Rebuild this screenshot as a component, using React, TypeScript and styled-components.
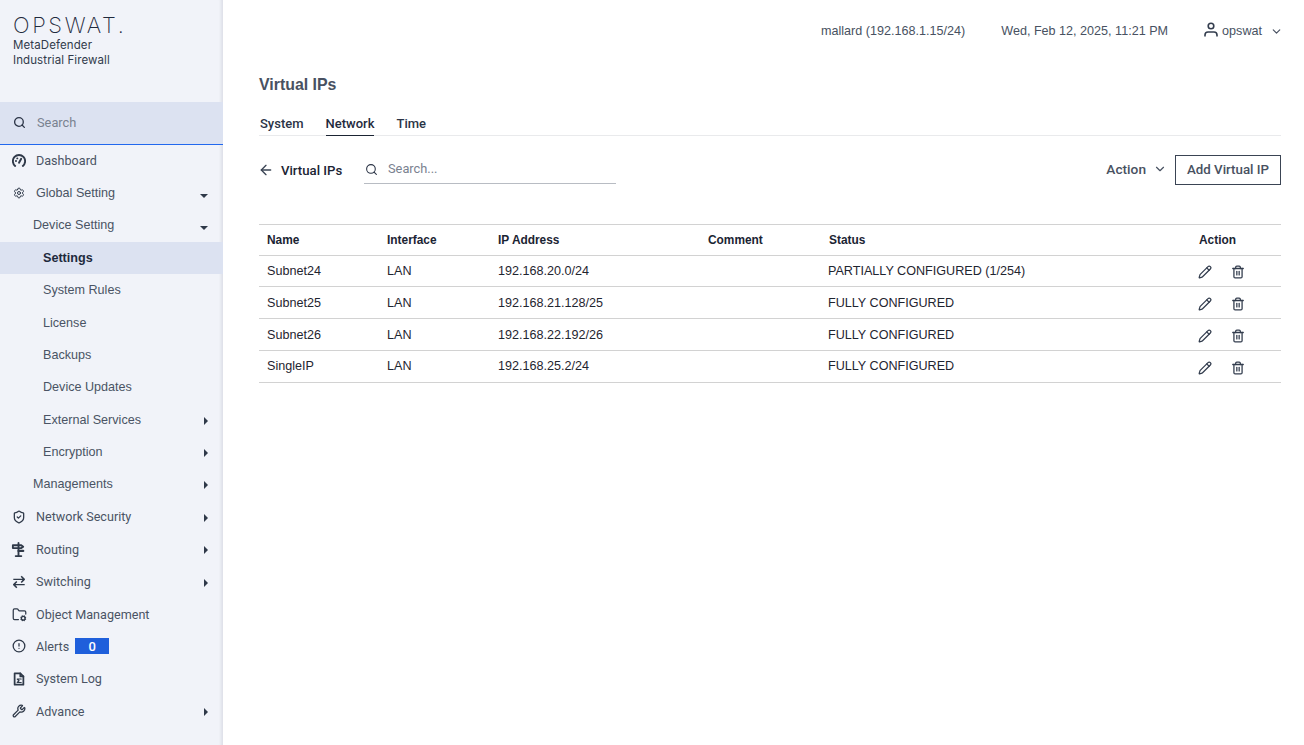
import React from 'react';
import styled, { createGlobalStyle } from 'styled-components';
import { Search, ArrowLeft, ChevronDown, Pencil, Trash2, Settings, ShieldCheck, FolderCog, CircleAlert, Wrench } from 'lucide-react';

const Global = createGlobalStyle`
  html, body { margin: 0; padding: 0; height: 100%; background: #fff; }
  body { font-family: "Liberation Sans", Arial, sans-serif; font-size: 12.6px; color: #485161; overflow: hidden; }
  #root { height: 100%; }
  * { box-sizing: border-box; }
`;

const Page = styled.div`display: flex; width: 1304px; height: 745px;`;
const Side = styled.aside`
  width: 223px; flex: none; background: #f1f3f9; box-shadow: inset -4px 0 3px -2px rgba(20,30,60,.09);
  display: flex; flex-direction: column; height: 745px;
`;
const Brand = styled.div`height: 102px; padding: 14px 0 0 13px; color: #313b4b;`;
const Logo = styled.div`font-family: "Inter", sans-serif; font-weight: 200; font-size: 22px; letter-spacing: 2.6px; line-height: 23px; height: 24px; color: #1f2a3d; white-space: nowrap;`;
const Product = styled.div`font-family: "Inter", sans-serif; font-size: 11.5px; line-height: 14.5px; letter-spacing: .1px;`;
const SearchRow = styled.div`
  height: 43px; background: #dce2f1; border-bottom: 1px solid #2168ee; display: flex; align-items: center;
  padding: 0 0 2px 13px; gap: 11px; color: #7a8290; margin-bottom: -1px; font-family: "Roboto", sans-serif; font-size: 12.8px;
  svg { color: #2b3446; }
`;
const Nav = styled.nav`display: flex; flex-direction: column; padding-top: .4px;`;
const Item = styled.div<{ $indent: number; $active?: boolean; $top?: boolean }>`
  height: 32.4px; display: flex; align-items: center; position: relative; padding-left: ${p => p.$indent}px;
  background: ${p => p.$active ? '#dce2f1' : 'transparent'};
  color: ${p => p.$active ? '#1f2a3d' : '#4a5364'}; font-weight: ${p => p.$active ? 700 : 400};
  ${p => p.$top ? 'font-family: "Roboto", sans-serif;' : ''}
`;
const IconSlot = styled.span`flex: none; display: inline-flex; align-items: center; color: #2f3949;`;
const Caret = styled.span<{ $open?: boolean }>`
  position: absolute; right: 15px; top: 50%; width: 0; height: 0; margin-top: ${p => p.$open ? 1 : -3}px;
  ${p => p.$open
    ? 'border-left: 4px solid transparent; border-right: 4px solid transparent; border-top: 4px solid #2f3949;'
    : 'border-top: 4px solid transparent; border-bottom: 4px solid transparent; border-left: 4px solid #2f3949;'}
`;
const Badge = styled.span`
  margin-left: 6px; width: 34px; height: 16px; background: #1f5fdb; color: #fff; font-size: 13px; font-weight: 500;
  display: inline-flex; align-items: center; justify-content: center;
`;
const Main = styled.main`flex: 1; padding: 0 23px 0 36px; min-width: 0;`;
const Top = styled.header`
  height: 62px; display: flex; justify-content: flex-end; align-items: center; gap: 36px; color: #485161;
`;
const UserBox = styled.span`display: inline-flex; align-items: center; gap: 4px;`;
const UserGlyph = styled.svg`display: block; fill: none; stroke: #333d4e; stroke-width: 1.6; margin-top: -3px;`;
const UserChevron = styled(ChevronDown)`margin: 0 -2px 0 4px;`;
const Title = styled.h1`margin: 13px 0 0; font-size: 15.9px; line-height: 20px; font-weight: 700; color: #485161;`;
const Tabs = styled.div`display: flex; gap: 22px; margin-top: 19px; height: 22px; border-bottom: 1px solid #e9eaec; padding-left: 1px;`;
const Tab = styled.div<{ $on?: boolean }>`
  font-family: "Roboto", sans-serif; font-size: 13px; font-weight: 500; color: #2b3446; height: 22px; line-height: 20px; ${p => p.$on ? 'border-bottom: 1px solid #1b2433; color:#1f2a3d;' : ''}
`;
const Bar = styled.div`display: flex; align-items: center; margin-top: 19px; height: 30px;`;
const Back = styled.div`display: flex; align-items: center; gap: 7px; margin-left: -1px; font-family: "Roboto", sans-serif; font-size: 13.2px; font-weight: 500; color: #1b2433; width: 106px; svg { color: #3a4454; }`;
const SearchBox = styled.div`
  width: 252px; height: 28px; display: flex; align-items: center; gap: 10px; padding-left: 1px; border-bottom: 1px solid #b8bcc3; color: #7a8290;
  font-family: "Roboto", sans-serif; font-size: 12.8px;
  svg { color: #2b3446; }
  span { margin-top: -3px; }
`;
const Spacer = styled.div`flex: 1;`;
const ActionMenu = styled.div`display: flex; align-items: center; gap: 7px; padding-bottom: 2px; font-family: "Roboto", sans-serif; font-size: 13.7px; font-weight: 500; color: #485161; margin-right: 8px;`;
const AddBtn = styled.button`
  width: 106px; height: 30px; background: #fff; border: 1px solid #3a4454; font: 500 13.3px "Roboto", sans-serif; color: #485161; padding: 0 0 2px;
`;
const Table = styled.table`width: 1022px; margin-top: 39px; border-collapse: collapse; table-layout: fixed; border-top: 1px solid #d2d2d2;`;
const Th = styled.th<{ $w: number }>`
  width: ${p => p.$w}px; text-align: left; font-size: 11.9px; font-weight: 700; color: #1b2433; height: 31px; padding: 0 0 0 8px; border-bottom: 1px solid #d2d2d2;
`;
const Row = styled.tr`
  &:first-child td { height: 31px; }
  &:nth-child(2) td, &:nth-child(3) td { padding-bottom: 0; }
`;
const Td = styled.td`
  height: 32px; padding: 0 0 1px 8px; border-bottom: 1px solid #d2d2d2; color: #1f2530;
  &:nth-child(5) { padding-left: 7px; }
`;
const Actions = styled.div`display: flex; gap: 19px; align-items: center; margin: 3px 0 0 -1px; color: #333d4e;`;
const Ico = styled.svg`display: block; fill: none; stroke: currentColor; stroke-linecap: round; stroke-linejoin: round;`;

const GaugeIcon = () => (
  <Ico width="14" height="14" viewBox="0 0 16 16" strokeWidth="2.2">
    <path d="M3.6 13.6A7 7 0 1 1 12.4 13.6" />
    <path d="M8 10L10.5 5.5" />
    <path d="M4.5 8H4.6M6 5H6.1" />
  </Ico>
);
const SignIcon = () => (
  <Ico width="15" height="15" viewBox="0 0 16 16" strokeWidth="2">
    <path d="M8 1V14.5M5 15H11" />
    <path d="M2 3.5H11L13 5L11 6.5H2Z" />
    <path d="M8 9.5H13" strokeWidth="2.4" />
  </Ico>
);
const SwapIcon = () => (
  <Ico width="14" height="14" viewBox="0 0 16 16" strokeWidth="1.7">
    <path d="M1.5 5H14M10.5 1.5L14 5L10.5 8.5" strokeLinecap="butt" />
    <path d="M14.5 11H2M5.5 7.5L2 11L5.5 14.5" strokeLinecap="butt" />
  </Ico>
);
const LogIcon = () => (
  <Ico width="14" height="14" viewBox="0 0 16 16" strokeWidth="2">
    <path d="M3 1.5H9.5L13 5V14.5H3Z" />
    <path d="M9.5 1.5V5H13" />
    <path d="M10.5 8H6L8 10L6 12H10.5" strokeWidth="1.4" />
  </Ico>
);

const nav: { t: string; i: number; top?: boolean; icon?: React.ReactNode; caret?: 'open' | 'closed'; active?: boolean; badge?: boolean }[] = [
  { t: 'Dashboard', i: 12, top: true, icon: <GaugeIcon /> },
  { t: 'Global Setting', i: 13, icon: <Settings size={12} strokeWidth={2} />, caret: 'open' },
  { t: 'Device Setting', i: 33, caret: 'open' },
  { t: 'Settings', i: 43, active: true },
  { t: 'System Rules', i: 43 },
  { t: 'License', i: 43 },
  { t: 'Backups', i: 43 },
  { t: 'Device Updates', i: 43 },
  { t: 'External Services', i: 43, caret: 'closed' },
  { t: 'Encryption', i: 43, caret: 'closed' },
  { t: 'Managements', i: 33, caret: 'closed' },
  { t: 'Network Security', i: 12, top: true, icon: <ShieldCheck size={14} strokeWidth={2.2} />, caret: 'closed' },
  { t: 'Routing', i: 11, top: true, icon: <SignIcon />, caret: 'closed' },
  { t: 'Switching', i: 12, top: true, icon: <SwapIcon />, caret: 'closed' },
  { t: 'Object Management', i: 12, top: true, icon: <FolderCog size={15} strokeWidth={2} /> },
  { t: 'Alerts', i: 12, top: true, icon: <CircleAlert size={14} strokeWidth={2.2} />, badge: true },
  { t: 'System Log', i: 12, top: true, icon: <LogIcon /> },
  { t: 'Advance', i: 12, top: true, icon: <Wrench size={14} strokeWidth={2.2} />, caret: 'closed' },
];

const rows = [
  ['Subnet24', 'LAN', '192.168.20.0/24', '', 'PARTIALLY CONFIGURED (1/254)'],
  ['Subnet25', 'LAN', '192.168.21.128/25', '', 'FULLY CONFIGURED'],
  ['Subnet26', 'LAN', '192.168.22.192/26', '', 'FULLY CONFIGURED'],
  ['SingleIP', 'LAN', '192.168.25.2/24', '', 'FULLY CONFIGURED'],
];

export default function App() {
  return (
    <Page>
      <Global />
      <Side>
        <Brand>
          <Logo>OPSWAT.</Logo>
          <Product>MetaDefender<br />Industrial Firewall</Product>
        </Brand>
        <SearchRow><Search size={13} strokeWidth={2.4} /><span>Search</span></SearchRow>
        <Nav>
          {nav.map(n => (
            <Item key={n.t} $indent={n.i} $active={n.active} $top={n.top}>
              {n.icon && <IconSlot style={{ width: 36 - n.i }}>{n.icon}</IconSlot>}
              {n.t}
              {n.badge && <Badge>0</Badge>}
              {n.caret && <Caret $open={n.caret === 'open'} />}
            </Item>
          ))}
        </Nav>
      </Side>
      <Main>
        <Top>
          <span>mallard (192.168.1.15/24)</span>
          <span>Wed, Feb 12, 2025, 11:21 PM</span>
          <UserBox>
            <UserGlyph width="14" height="15" viewBox="0 0 14 15">
              <circle cx="7" cy="4" r="2.8" />
              <path d="M1 14.5V13a3 3 0 0 1 3-3h6a3 3 0 0 1 3 3v1.5" />
            </UserGlyph>
            opswat
            <UserChevron size={13} strokeWidth={2.2} />
          </UserBox>
        </Top>
        <Title>Virtual IPs</Title>
        <Tabs><Tab>System</Tab><Tab $on>Network</Tab><Tab>Time</Tab></Tabs>
        <Bar>
          <Back><ArrowLeft size={16} strokeWidth={2} />Virtual IPs</Back>
          <SearchBox><Search size={13} strokeWidth={2} /><span>Search...</span></SearchBox>
          <Spacer />
          <ActionMenu>Action <ChevronDown size={14} strokeWidth={2} /></ActionMenu>
          <AddBtn>Add Virtual IP</AddBtn>
        </Bar>
        <Table>
          <thead>
            <tr>
              <Th $w={120}>Name</Th><Th $w={111}>Interface</Th><Th $w={210}>IP Address</Th><Th $w={121}>Comment</Th><Th $w={370}>Status</Th><Th $w={90}>Action</Th>
            </tr>
          </thead>
          <tbody>
            {rows.map(r => (
              <Row key={r[0]}>
                {r.map((c, i) => <Td key={i}>{c}</Td>)}
                <Td><Actions><Pencil size={14} strokeWidth={2.1} /><Trash2 size={14} strokeWidth={2.2} /></Actions></Td>
              </Row>
            ))}
          </tbody>
        </Table>
      </Main>
    </Page>
  );
}
